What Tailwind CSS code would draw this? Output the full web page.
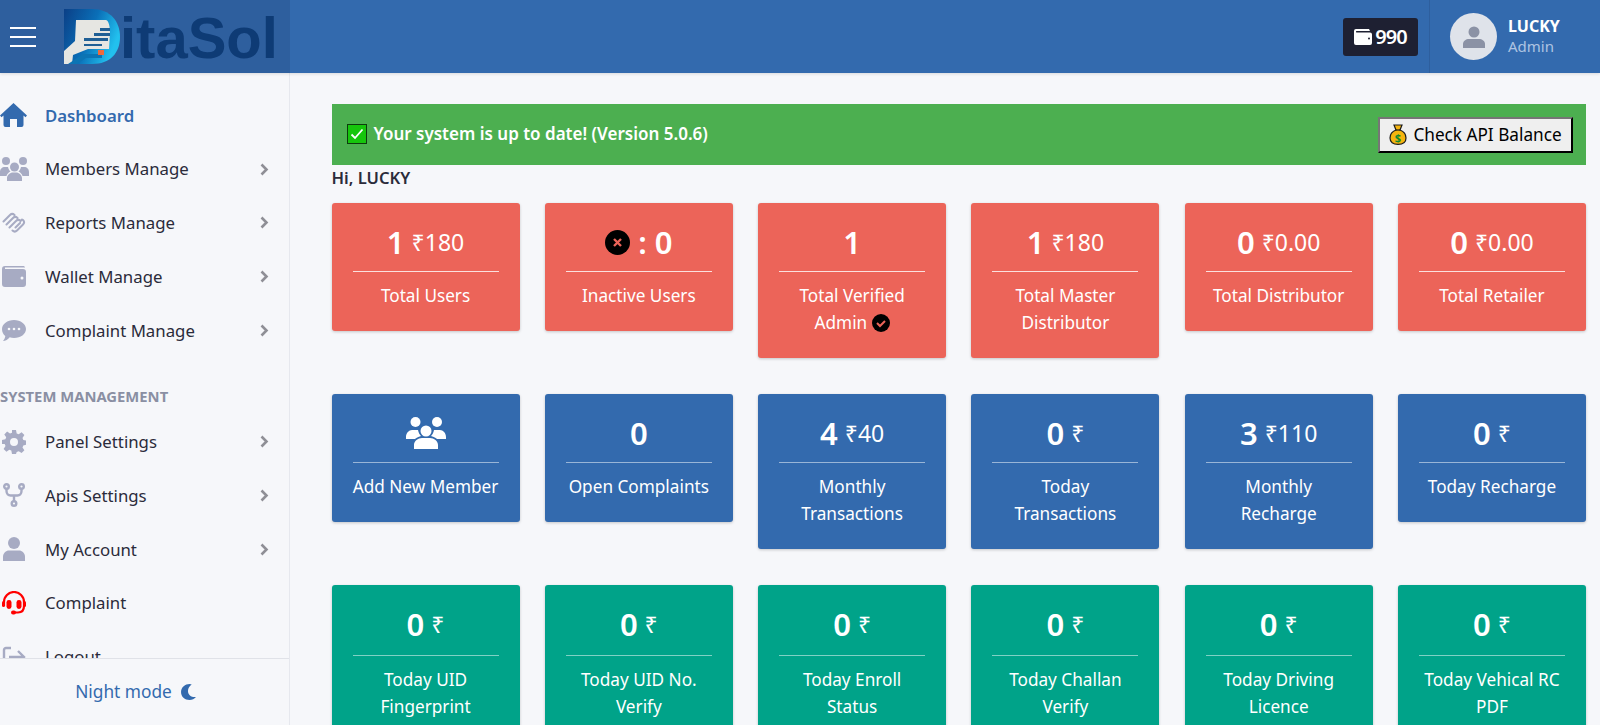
<!DOCTYPE html>
<html lang="en">
<head>
    <meta charset="UTF-8">
    <meta name="viewport" content="width=device-width, initial-scale=1.0">
    <title>DitaSol Dashboard</title>
    <script src="https://cdn.jsdelivr.net/npm/@tailwindcss/browser@4"></script>
</head>
<body class="h-screen overflow-hidden bg-[#f6f7fa] font-['Noto_Sans',sans-serif] text-[#2b2b3a]">
    <!-- Header -->
    <header class="relative z-10 flex h-[73px] bg-[#336aae] shadow-[0_1px_3px_rgba(0,0,0,0.12)]">
        <div class="flex w-[290px] shrink-0 items-center bg-[#2e5f9e]">
            <div class="ml-[10px] flex w-[26px] flex-col gap-[7px]">
                <span class="h-[2px] bg-white"></span>
                <span class="h-[2px] bg-white"></span>
                <span class="h-[2px] bg-white"></span>
            </div>
            <div class="ml-[28px] flex items-center">
                <svg class="h-[56px] w-[57px]" viewBox="0 0 57 56">
                    <defs>
                        <linearGradient id="logoD" x1="0" x2="1" y1="0" y2="0.4">
                            <stop offset="0" stop-color="#0b3f86"></stop>
                            <stop offset="0.55" stop-color="#0a6fb8"></stop>
                            <stop offset="1" stop-color="#22c0ee"></stop>
                        </linearGradient>
                    </defs>
                    <path fill="url(#logoD)" d="M0 0H28C46 0 56 12 56 28S46 55 28 55H0Z"></path>
                    <path fill="#e6e6e2" d="M12 11H42C45 12 46 18 46 24L45 40H24L9 46 8 55H0V42L11 32Z"></path>
                    <path fill="#1f5f95" d="M20 35H38V37H20ZM30 24H46V27H30ZM36 19H46V22H36ZM20 29H44V32H20Z"></path>
                    <path fill="#0c74b4" d="M4 55 19 45H38V49H22L13 55Z"></path>
                    <rect x="34" y="41" width="6" height="5" fill="#ef6a3c"></rect>
                </svg>
                <span class="-ml-[1px] mt-[2px] font-['Liberation_Sans',sans-serif] text-[58px] leading-none font-bold text-[#0e3b75]">itaSol</span>
            </div>
        </div>
        <div class="flex flex-1 items-center justify-end">
            <div class="flex h-[38px] w-[75px] items-center justify-center gap-[3px] rounded-[3px] bg-[#1e2032] text-[20px] font-semibold tracking-[-1px] text-white">
                <svg class="h-[16px] w-[18px]" viewBox="0 0 18 16"><path fill="#fff" d="M2 0h13l1 2H2.500a.8.800 0 0 0 0 1.500H16a2 2 0 0 1 2 2V14a2 2 0 0 1-2 2H2a2 2 0 0 1-2-2V2a2 2 0 0 1 2-2Z"></path><circle cx="15" cy="9.500" r="1" fill="#1e2032"></circle></svg>
                <span>990</span>
            </div>
            <div class="ml-[11px] flex h-full w-[171px] items-center border-l border-[#2e5f9e] pl-[20px]">
                <div class="flex h-[47px] w-[47px] items-center justify-center rounded-full bg-[#dfe3ea]">
                    <svg class="h-[22px] w-[22px]" viewBox="0 0 22 22"><circle cx="11" cy="6" r="5.500" fill="#8b92a5"></circle><path fill="#8b92a5" d="M0 22v-4c0-3 3-5 6-5h10c3 0 6 2 6 5v4Z"></path></svg>
                </div>
                <div class="-mt-[2px] ml-[11px]">
                    <div class="text-[16px] leading-[20px] font-bold text-white">LUCKY</div>
                    <div class="text-[15px] leading-[20px] text-[#aec4e2]">Admin</div>
                </div>
            </div>
        </div>
    </header>

    <div class="flex h-[652px]">
        <!-- Sidebar -->
        <aside class="flex w-[290px] shrink-0 flex-col border-r border-[#e6e8ee]">
            <nav class="h-[585px] overflow-hidden pt-[15.500px] text-[16.800px]">
                <a class="flex h-[53.7px] items-center font-semibold text-[#336aae]">
                    <svg class="w-[27px]" viewBox="0 0 27 24"><path fill="#336aae" d="M13.500 0 27 12.500l-1.500 1.700L23.500 12.500V22a2 2 0 0 1-2 2H17v-8h-7v8H5.500a2 2 0 0 1-2-2V12.500L1.500 14.200 0 12.500Z"></path></svg>
                    <span class="ml-[18px]">Dashboard</span>
                </a>
                <a class="flex h-[53.7px] items-center">
                    <svg class="w-[29px]" viewBox="0 0 29 24"><g fill="#a7abc3"><circle cx="6" cy="4" r="4"></circle><circle cx="23" cy="4" r="4"></circle><circle cx="14.500" cy="10" r="4.500"></circle><path d="M0 15c0-3 2-5 5-5h3c.5 2 1.500 3.500 2.500 4.500-2 1-3.500 2.500-4 4.500H0ZM29 15c0-3-2-5-5-5h-3c-.5 2-1.500 3.500-2.500 4.500 2 1 3.500 2.500 4 4.500H29ZM7 24v-3c0-3 3-5.500 6-5.500h3c3 0 6 2.500 6 5.500v3Z"></path></g></svg>
                    <span class="ml-[16px] flex-1">Members Manage</span>
                    <svg class="mr-[20px] h-[13px] w-[9px]" viewBox="0 0 9 13"><path fill="none" stroke="#8f8f96" stroke-width="2.600" d="M1.500 1.500 6.500 6.500 1.500 11.500"></path></svg>
                </a>
                <a class="flex h-[53.7px] items-center">
                    <svg class="ml-[2px] w-[25px]" viewBox="0 0 25 21"><g fill="none" stroke="#a7abc3" stroke-width="2" stroke-linecap="round"><path d="M1.500 9.500 8 3a3.200 3.200 0 0 1 4.500 0M4.500 12.500 11 6a3.200 3.200 0 0 1 4.500 0M7.500 15.500 14 9a3.200 3.200 0 0 1 4.500 0L20 7.500M10.500 18.500a3.200 3.200 0 0 0 4.500 0l6-6a3.200 3.200 0 0 0 0-4.500M13.500 15.500 18 11"></path></g></svg>
                    <span class="ml-[18px] flex-1">Reports Manage</span>
                    <svg class="mr-[20px] h-[13px] w-[9px]" viewBox="0 0 9 13"><path fill="none" stroke="#8f8f96" stroke-width="2.600" d="M1.500 1.500 6.500 6.500 1.500 11.500"></path></svg>
                </a>
                <a class="flex h-[53.7px] items-center">
                    <svg class="ml-[2px] w-[24px]" viewBox="0 0 24 21"><path fill="#a7abc3" d="M3 0h18c1 0 2 .5 2 1.500H3V3h18a3 3 0 0 1 3 3v12a3 3 0 0 1-3 3H3a3 3 0 0 1-3-3V3a3 3 0 0 1 3-3Z"></path><circle cx="20" cy="12" r="1.500" fill="#f6f7fa"></circle></svg>
                    <span class="ml-[19px] flex-1">Wallet Manage</span>
                    <svg class="mr-[20px] h-[13px] w-[9px]" viewBox="0 0 9 13"><path fill="none" stroke="#8f8f96" stroke-width="2.600" d="M1.500 1.500 6.500 6.500 1.500 11.500"></path></svg>
                </a>
                <a class="flex h-[53.7px] items-center">
                    <svg class="ml-[2px] w-[24px]" viewBox="0 0 24 21"><path fill="#a7abc3" d="M12 0c6.600 0 12 4 12 9s-5.400 9-12 9c-1.500 0-3-.2-4.300-.7C6 19.500 3.500 21 1 21c1-1 2-3 2.300-5C1.300 14.500 0 12 0 9c0-5 5.400-9 12-9Z"></path><g fill="#f6f7fa"><circle cx="7" cy="9" r="1.300"></circle><circle cx="12" cy="9" r="1.300"></circle><circle cx="17" cy="9" r="1.300"></circle></g></svg>
                    <span class="ml-[19px] flex-1">Complaint Manage</span>
                    <svg class="mr-[20px] h-[13px] w-[9px]" viewBox="0 0 9 13"><path fill="none" stroke="#8f8f96" stroke-width="2.600" d="M1.500 1.500 6.500 6.500 1.500 11.500"></path></svg>
                </a>
                <div class="flex h-[58px] items-center pt-[20px] text-[14.800px] font-bold text-[#8a8fa3]">SYSTEM MANAGEMENT</div>
                <a class="flex h-[53.7px] items-center">
                    <svg class="ml-[2px] w-[24px]" viewBox="0 0 24 24"><path fill="#a7abc3" fill-rule="evenodd" d="M10 0h4l.7 3.400 2 .8L19.600 2.300l2.800 2.800-1.900 2.900.8 2 3.400.7v4l-3.400.7-.8 2 1.900 2.900-2.800 2.800-2.900-1.900-2 .8L14 24h-4l-.7-3.400-2-.8-2.900 1.900-2.800-2.800 1.900-2.900-.8-2L0 14v-4l3.400-.7.800-2-1.900-2.900 2.800-2.800 2.900 1.900 2-.8ZM12 8a4 4 0 1 0 0 8 4 4 0 0 0 0-8Z"></path></svg>
                    <span class="ml-[19px] flex-1">Panel Settings</span>
                    <svg class="mr-[20px] h-[13px] w-[9px]" viewBox="0 0 9 13"><path fill="none" stroke="#8f8f96" stroke-width="2.600" d="M1.500 1.500 6.500 6.500 1.500 11.500"></path></svg>
                </a>
                <a class="flex h-[53.7px] items-center">
                    <svg class="ml-[3px] w-[22px]" viewBox="0 0 22 24"><g fill="none" stroke="#a7abc3" stroke-width="2.400"><circle cx="3.500" cy="3.500" r="2.300"></circle><circle cx="18.500" cy="3.500" r="2.300"></circle><circle cx="11" cy="20.500" r="2.300"></circle><path d="M3.500 6v2c0 3 2 4.500 4 4.500h7c2 0 4-1.500 4-4.500V6M11 12.500V18"></path></g></svg>
                    <span class="ml-[20px] flex-1">Apis Settings</span>
                    <svg class="mr-[20px] h-[13px] w-[9px]" viewBox="0 0 9 13"><path fill="none" stroke="#8f8f96" stroke-width="2.600" d="M1.500 1.500 6.500 6.500 1.500 11.500"></path></svg>
                </a>
                <a class="flex h-[53.7px] items-center">
                    <svg class="ml-[3px] w-[22px]" viewBox="0 0 22 24"><circle cx="11" cy="6" r="6" fill="#a7abc3"></circle><path fill="#a7abc3" d="M0 24v-4c0-4 3-6.500 6-6.500h10c3 0 6 2.500 6 6.500v4Z"></path></svg>
                    <span class="ml-[20px] flex-1">My Account</span>
                    <svg class="mr-[20px] h-[13px] w-[9px]" viewBox="0 0 9 13"><path fill="none" stroke="#8f8f96" stroke-width="2.600" d="M1.500 1.500 6.500 6.500 1.500 11.500"></path></svg>
                </a>
                <a class="flex h-[53.7px] items-center">
                    <svg class="ml-[2px] w-[24px]" viewBox="0 0 24 24"><g fill="none" stroke="#ff0000" stroke-width="2.200"><path d="M2 15v-4a10 10 0 0 1 20 0v4M22 15c0 4-2 6.500-6 6.500h-4"></path></g><g fill="#ff0000"><rect x="4.500" y="9" width="5" height="9" rx="2.400"></rect><rect x="14.500" y="9" width="5" height="9" rx="2.400"></rect><rect x="9" y="19.500" width="5" height="4" rx="2"></rect><rect x="0" y="10" width="3" height="6" rx="1.500"></rect><rect x="21" y="10" width="3" height="6" rx="1.500"></rect></g></svg>
                    <span class="ml-[19px]">Complaint</span>
                </a>
                <a class="flex h-[53.7px] items-center">
                    <svg class="ml-[2px] w-[24px]" viewBox="0 0 24 22"><g fill="none" stroke="#a7abc3" stroke-width="2.400"><path d="M9 2H4a2 2 0 0 0-2 2v14a2 2 0 0 0 2 2h5"></path><path d="M7 11h15M16 5l6 6-6 6"></path></g></svg>
                    <span class="ml-[19px]">Logout</span>
                </a>
            </nav>
            <div class="flex h-[67px] items-center justify-center gap-[9px] border-t border-[#e0e2e8] pr-[18px] text-[17.300px] text-[#336aae]">
                <span>Night mode</span>
                <svg class="h-[16px] w-[15px]" viewBox="0 0 14 15"><path fill="#336aae" d="M8 0C4 0 0 3 0 7.500S3.500 15 8 15c2.400 0 4.500-1 6-2.800-4 .6-7.500-2-7.500-5.700C6.500 4 8 1.700 10 .5 9.400.2 8.700 0 8 0Z"></path></svg>
            </div>
        </aside>

        <!-- Main -->
        <main class="flex-1 overflow-hidden pt-[31px] pr-[14px] pl-[41.500px]">
            <div class="flex h-[61px] items-center justify-between bg-[#4caf50] pr-[13px] pl-[15px]">
                <div class="-mt-[2px] flex items-center gap-[7px] text-[17px] font-semibold text-white">
                    <span class="flex h-[20px] w-[20px] items-center justify-center border-[1.500px] border-[#0d3d0d] bg-[#16c60c]">
                        <svg class="h-[12px] w-[14px]" viewBox="0 0 14 12"><path fill="none" stroke="#fff" stroke-width="1.800" d="M1.500 6.500 5 10l7.500-8.500"></path></svg>
                    </span>
                    <span>Your system is up to date! (Version 5.0.6)</span>
                </div>
                <button class="flex h-[36px] w-[195px] items-center justify-center gap-[6px] border-2 border-t-[#767676] border-r-black border-b-black border-l-[#767676] bg-[#efefef] text-[17.200px] text-black">
                    <svg class="h-[21px] w-[18px]" viewBox="0 0 18 21"><path fill="#f5b50f" stroke="#1c1c1c" stroke-width="1.200" d="M5 1h8l-2 5c4 1.500 6 4.500 6 8 0 4-3 6.400-8 6.400S1 18 1 14c0-3.500 2-6.500 6-8Z"></path><path fill="none" stroke="#1c1c1c" stroke-width="1.200" d="M6.500 6h5"></path><text x="9" y="17.500" text-anchor="middle" font-size="11" font-weight="700" fill="#128a2e">$</text></svg>
                    <span>Check API Balance</span>
                </button>
            </div>
            <p class="mt-[1px] h-[37px] text-[16.600px] leading-[24px] font-semibold">Hi, LUCKY</p>

            <!-- Stats red -->
            <div class="grid h-[191px] grid-cols-6 items-start gap-x-[25.200px]">
                <div class="rounded-[3px] bg-[#ec6459] px-[21px] pt-[21px] pb-[22px] text-center text-white shadow-[0_1px_3px_rgba(0,0,0,0.2)]">
                    <div class="flex h-[48px] items-center justify-center gap-[7px] border-b border-white/80 pb-[11px]"><b class="text-[31px] font-semibold">1</b><span class="text-[23px]">₹180</span></div>
                    <div class="mt-[10px] text-[17.200px] leading-[27px]">Total Users</div>
                </div>
                <div class="rounded-[3px] bg-[#ec6459] px-[21px] pt-[21px] pb-[22px] text-center text-white shadow-[0_1px_3px_rgba(0,0,0,0.2)]">
                    <div class="flex h-[48px] items-center justify-center gap-[8px] border-b border-white/80 pb-[11px]">
                        <svg class="h-[25px] w-[25px]" viewBox="0 0 25 25"><circle cx="12.500" cy="12.500" r="12.500" fill="#000"></circle><path stroke="#ec6459" stroke-width="2.400" d="M9 9l7 7M16 9l-7 7"></path></svg>
                        <b class="text-[31px] font-semibold">: 0</b>
                    </div>
                    <div class="mt-[10px] text-[17.200px] leading-[27px]">Inactive Users</div>
                </div>
                <div class="rounded-[3px] bg-[#ec6459] px-[21px] pt-[21px] pb-[22px] text-center text-white shadow-[0_1px_3px_rgba(0,0,0,0.2)]">
                    <div class="flex h-[48px] items-center justify-center gap-[7px] border-b border-white/80 pb-[11px]"><b class="text-[31px] font-semibold">1</b></div>
                    <div class="mt-[10px] text-[17.200px] leading-[27px]">Total Verified<br>Admin <svg class="inline-block h-[18px] w-[18px] align-[-3px]" viewBox="0 0 18 18"><circle cx="9" cy="9" r="9" fill="#000"></circle><path fill="none" stroke="#ec6459" stroke-width="2" d="M5 9l3 3 5-5"></path></svg></div>
                </div>
                <div class="rounded-[3px] bg-[#ec6459] px-[21px] pt-[21px] pb-[22px] text-center text-white shadow-[0_1px_3px_rgba(0,0,0,0.2)]">
                    <div class="flex h-[48px] items-center justify-center gap-[7px] border-b border-white/80 pb-[11px]"><b class="text-[31px] font-semibold">1</b><span class="text-[23px]">₹180</span></div>
                    <div class="mt-[10px] text-[17.200px] leading-[27px]">Total Master<br>Distributor</div>
                </div>
                <div class="rounded-[3px] bg-[#ec6459] px-[21px] pt-[21px] pb-[22px] text-center text-white shadow-[0_1px_3px_rgba(0,0,0,0.2)]">
                    <div class="flex h-[48px] items-center justify-center gap-[7px] border-b border-white/80 pb-[11px]"><b class="text-[31px] font-semibold">0</b><span class="text-[23px]">₹0.00</span></div>
                    <div class="mt-[10px] text-[17.200px] leading-[27px]">Total Distributor</div>
                </div>
                <div class="rounded-[3px] bg-[#ec6459] px-[21px] pt-[21px] pb-[22px] text-center text-white shadow-[0_1px_3px_rgba(0,0,0,0.2)]">
                    <div class="flex h-[48px] items-center justify-center gap-[7px] border-b border-white/80 pb-[11px]"><b class="text-[31px] font-semibold">0</b><span class="text-[23px]">₹0.00</span></div>
                    <div class="mt-[10px] text-[17.200px] leading-[27px]">Total Retailer</div>
                </div>
            </div>

            <!-- Stats blue -->
            <div class="grid h-[191px] grid-cols-6 items-start gap-x-[25.200px]">
                <div class="rounded-[3px] bg-[#336aae] px-[21px] pt-[21px] pb-[22px] text-center text-white shadow-[0_1px_3px_rgba(0,0,0,0.2)]">
                    <div class="flex h-[48px] items-center justify-center border-b border-white/50 pb-[11px]">
                        <svg class="h-[32px] w-[40px]" viewBox="0 0 40 32"><g fill="#fff"><circle cx="9.500" cy="5" r="5"></circle><circle cx="31" cy="5" r="5"></circle><circle cx="20" cy="14" r="5.500"></circle><path d="M0 20c0-4 3-7 6-7h6c.5 2.500 1.500 4.500 3 6-3 1-5 2-6 3H0ZM40 20c0-4-3-7-6-7h-6c-.5 2.500-1.500 4.500-3 6 3 1 5 2 6 3h9ZM8 32v-4c0-4 4-7 8-7h8c4 0 8 3 8 7v4Z"></path></g></svg>
                    </div>
                    <div class="mt-[10px] text-[17.200px] leading-[27px]">Add New Member</div>
                </div>
                <div class="rounded-[3px] bg-[#336aae] px-[21px] pt-[21px] pb-[22px] text-center text-white shadow-[0_1px_3px_rgba(0,0,0,0.2)]">
                    <div class="flex h-[48px] items-center justify-center gap-[7px] border-b border-white/50 pb-[11px]"><b class="text-[31px] font-semibold">0</b></div>
                    <div class="mt-[10px] text-[17.200px] leading-[27px]">Open Complaints</div>
                </div>
                <div class="rounded-[3px] bg-[#336aae] px-[21px] pt-[21px] pb-[22px] text-center text-white shadow-[0_1px_3px_rgba(0,0,0,0.2)]">
                    <div class="flex h-[48px] items-center justify-center gap-[7px] border-b border-white/50 pb-[11px]"><b class="text-[31px] font-semibold">4</b><span class="text-[23px]">₹40</span></div>
                    <div class="mt-[10px] text-[17.200px] leading-[27px]">Monthly<br>Transactions</div>
                </div>
                <div class="rounded-[3px] bg-[#336aae] px-[21px] pt-[21px] pb-[22px] text-center text-white shadow-[0_1px_3px_rgba(0,0,0,0.2)]">
                    <div class="flex h-[48px] items-center justify-center gap-[7px] border-b border-white/50 pb-[11px]"><b class="text-[31px] font-semibold">0</b><span class="text-[23px]">₹</span></div>
                    <div class="mt-[10px] text-[17.200px] leading-[27px]">Today<br>Transactions</div>
                </div>
                <div class="rounded-[3px] bg-[#336aae] px-[21px] pt-[21px] pb-[22px] text-center text-white shadow-[0_1px_3px_rgba(0,0,0,0.2)]">
                    <div class="flex h-[48px] items-center justify-center gap-[7px] border-b border-white/50 pb-[11px]"><b class="text-[31px] font-semibold">3</b><span class="text-[23px]">₹110</span></div>
                    <div class="mt-[10px] text-[17.200px] leading-[27px]">Monthly<br>Recharge</div>
                </div>
                <div class="rounded-[3px] bg-[#336aae] px-[21px] pt-[21px] pb-[22px] text-center text-white shadow-[0_1px_3px_rgba(0,0,0,0.2)]">
                    <div class="flex h-[48px] items-center justify-center gap-[7px] border-b border-white/50 pb-[11px]"><b class="text-[31px] font-semibold">0</b><span class="text-[23px]">₹</span></div>
                    <div class="mt-[10px] text-[17.200px] leading-[27px]">Today Recharge</div>
                </div>
            </div>

            <!-- Stats green -->
            <div class="grid grid-cols-6 items-start gap-x-[25.200px]">
                <div class="rounded-[3px] bg-[#00a389] px-[21px] pt-[21px] pb-[22px] text-center text-white shadow-[0_1px_3px_rgba(0,0,0,0.2)]">
                    <div class="flex h-[50px] items-center justify-center gap-[7px] border-b border-white/50 pb-[12px]"><b class="text-[31px] font-semibold">0</b><span class="text-[23px]">₹</span></div>
                    <div class="mt-[10px] text-[17.200px] leading-[27px]">Today UID<br>Fingerprint</div>
                </div>
                <div class="rounded-[3px] bg-[#00a389] px-[21px] pt-[21px] pb-[22px] text-center text-white shadow-[0_1px_3px_rgba(0,0,0,0.2)]">
                    <div class="flex h-[50px] items-center justify-center gap-[7px] border-b border-white/50 pb-[12px]"><b class="text-[31px] font-semibold">0</b><span class="text-[23px]">₹</span></div>
                    <div class="mt-[10px] text-[17.200px] leading-[27px]">Today UID No.<br>Verify</div>
                </div>
                <div class="rounded-[3px] bg-[#00a389] px-[21px] pt-[21px] pb-[22px] text-center text-white shadow-[0_1px_3px_rgba(0,0,0,0.2)]">
                    <div class="flex h-[50px] items-center justify-center gap-[7px] border-b border-white/50 pb-[12px]"><b class="text-[31px] font-semibold">0</b><span class="text-[23px]">₹</span></div>
                    <div class="mt-[10px] text-[17.200px] leading-[27px]">Today Enroll<br>Status</div>
                </div>
                <div class="rounded-[3px] bg-[#00a389] px-[21px] pt-[21px] pb-[22px] text-center text-white shadow-[0_1px_3px_rgba(0,0,0,0.2)]">
                    <div class="flex h-[50px] items-center justify-center gap-[7px] border-b border-white/50 pb-[12px]"><b class="text-[31px] font-semibold">0</b><span class="text-[23px]">₹</span></div>
                    <div class="mt-[10px] text-[17.200px] leading-[27px]">Today Challan<br>Verify</div>
                </div>
                <div class="rounded-[3px] bg-[#00a389] px-[21px] pt-[21px] pb-[22px] text-center text-white shadow-[0_1px_3px_rgba(0,0,0,0.2)]">
                    <div class="flex h-[50px] items-center justify-center gap-[7px] border-b border-white/50 pb-[12px]"><b class="text-[31px] font-semibold">0</b><span class="text-[23px]">₹</span></div>
                    <div class="mt-[10px] text-[17.200px] leading-[27px]">Today Driving<br>Licence</div>
                </div>
                <div class="rounded-[3px] bg-[#00a389] px-[21px] pt-[21px] pb-[22px] text-center text-white shadow-[0_1px_3px_rgba(0,0,0,0.2)]">
                    <div class="flex h-[50px] items-center justify-center gap-[7px] border-b border-white/50 pb-[12px]"><b class="text-[31px] font-semibold">0</b><span class="text-[23px]">₹</span></div>
                    <div class="mt-[10px] text-[17.200px] leading-[27px]">Today Vehical RC<br>PDF</div>
                </div>
            </div>
        </main>
    </div>
</body>
</html>
